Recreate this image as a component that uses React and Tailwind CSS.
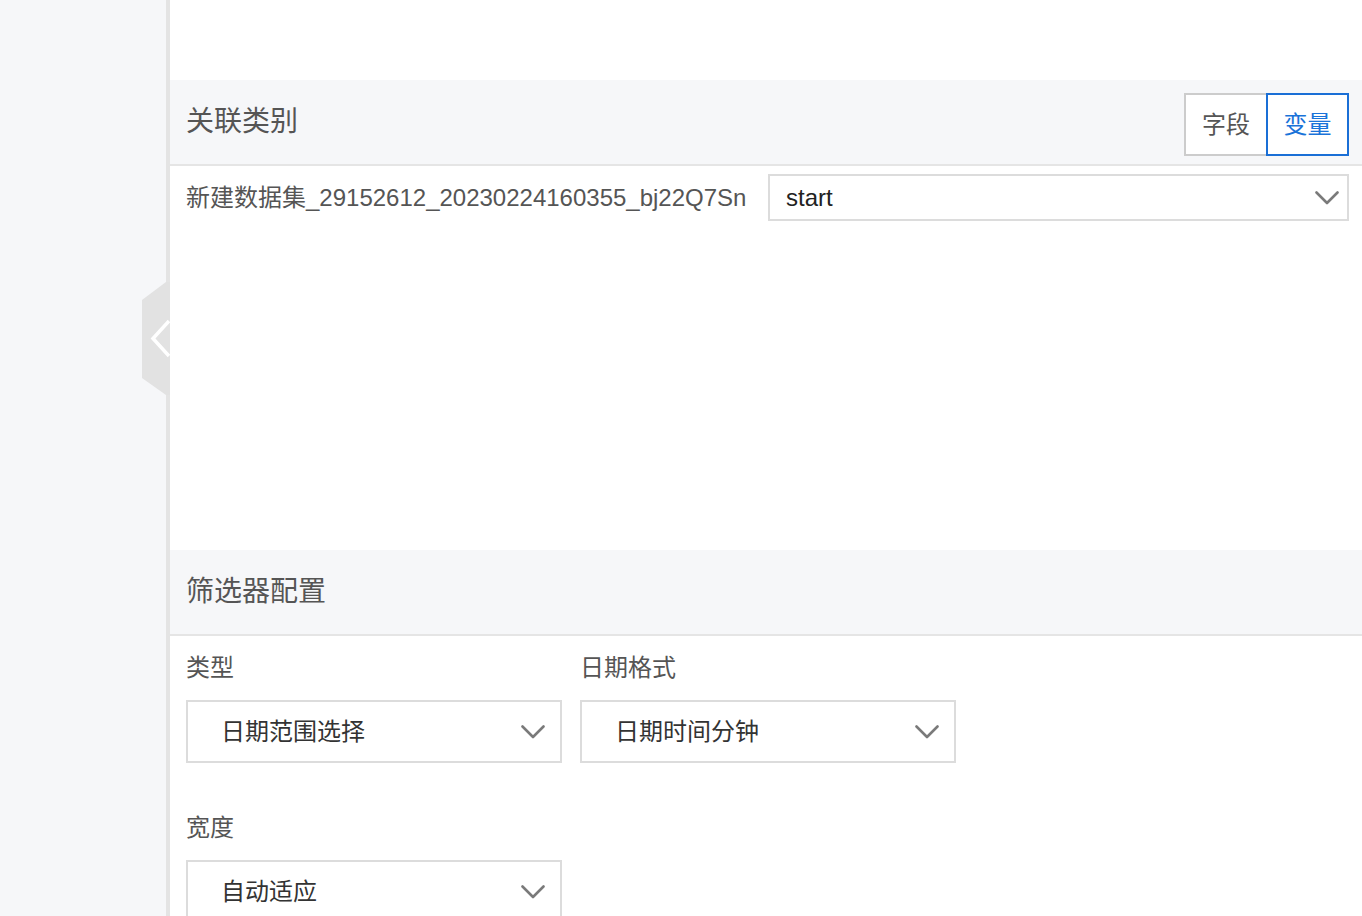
import React from "react";

const FONT = { fontFamily: '"Liberation Sans", "Noto Sans CJK SC", sans-serif' };

function Chevron() {
  return (
    <svg width="24" height="14" viewBox="0 0 24 14" className="shrink-0">
      <polyline points="1.5,1.5 12,12 22.5,1.5" fill="none" stroke="#7a7a7a" strokeWidth="2.6" strokeLinecap="round" strokeLinejoin="round" />
    </svg>
  );
}

function Select({ label }) {
  return (
    <div className="flex h-[63px] w-[376px] items-center justify-between border-2 border-[#dcdcdc] bg-white pl-[33px] pr-[15px]">
      <span className="text-[24px] leading-none text-[#333]">{label}</span>
      <Chevron />
    </div>
  );
}

function Field({ label, value }) {
  return (
    <div className="flex flex-col gap-4">
      <div className="h-[32px] text-[24px] leading-[32px] text-[#555]">{label}</div>
      <Select label={value} />
    </div>
  );
}

function SectionHeader({ title, children }) {
  return (
    <div className="flex h-[86px] shrink-0 items-center justify-between border-b-2 border-[#e5e5e5] bg-[#f6f7f9] pl-4 pr-[13px]">
      <span className="text-[28px] leading-none text-[#555]">{title}</span>
      {children}
    </div>
  );
}

export default function App() {
  return (
    <div className="relative flex h-[916px] w-[1362px] overflow-hidden bg-[#f6f7f9]" style={FONT}>
      <div className="w-[166px] shrink-0" />
      <div className="w-[4px] shrink-0 bg-[#e4e4e4]" />
      <div className="flex min-w-0 flex-1 flex-col bg-white">
        <div className="h-[80px] shrink-0" />
        <SectionHeader title="关联类别">
          <div className="mt-[5px] flex">
            <button className="flex h-[63px] w-[82px] items-center justify-center border-2 border-r-0 border-[#cccccc] bg-white text-[24px] leading-none text-[#555]">
              字段
            </button>
            <button className="flex h-[63px] w-[83px] items-center justify-center border-2 border-[#1a6fd6] bg-white text-[24px] leading-none text-[#1a73d9]">
              变量
            </button>
          </div>
        </SectionHeader>
        <div className="h-[384px] shrink-0 pl-4 pr-[13px] pt-2">
          <div className="flex items-center justify-between">
            <span className="whitespace-nowrap text-[24px] leading-none text-[#555]">
              新建数据集_29152612_20230224160355_bj22Q7Sn
            </span>
            <div className="flex h-[47px] w-[581px] items-center justify-between border-2 border-[#dcdcdc] pl-4 pr-[8px]">
              <span className="text-[24px] leading-none text-[#222]">start</span>
              <Chevron />
            </div>
          </div>
        </div>
        <SectionHeader title="筛选器配置" />
        <div className="grid grid-cols-[376px_376px] gap-x-[18px] gap-y-[49px] pl-4 pt-4">
          <Field label="类型" value="日期范围选择" />
          <Field label="日期格式" value="日期时间分钟" />
          <Field label="宽度" value="自动适应" />
        </div>
      </div>
      <div className="absolute left-[142px] top-[282px] h-[113px] w-[28px]">
        <svg width="28" height="113" viewBox="0 0 28 113">
          <polygon points="0,18 24,0 28,0 28,113 24,113 0,96" fill="#e2e2e2" />
          <polyline points="27,39 11,56.5 27,74" fill="none" stroke="#ffffff" strokeWidth="3.5" strokeLinejoin="miter" />
        </svg>
      </div>
    </div>
  );
}
